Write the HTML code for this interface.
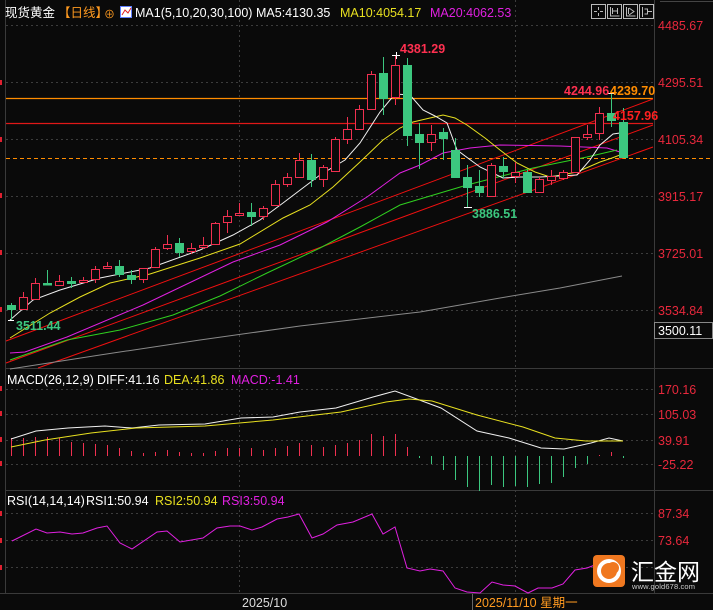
<!DOCTYPE html>
<html><head><meta charset="utf-8"><style>
html,body{margin:0;padding:0;background:#0a0a0a;width:713px;height:610px;overflow:hidden}
svg{display:block;font-family:"Liberation Sans","Noto Sans CJK SC",sans-serif}
</style></head><body>
<svg width="713" height="610" viewBox="0 0 713 610" xmlns="http://www.w3.org/2000/svg">
<rect width="713" height="610" fill="#0a0a0a"/>
<g stroke="#3a3a3a" stroke-width="1" fill="none">
<line x1="5.5" y1="0" x2="5.5" y2="593"/>
<line x1="654.5" y1="0" x2="654.5" y2="593"/>
<line x1="5" y1="368.5" x2="713" y2="368.5"/>
<line x1="5" y1="490.5" x2="713" y2="490.5"/>
<line x1="0" y1="593.5" x2="713" y2="593.5"/>
</g>
<g stroke="#3c3c3c" stroke-width="1" stroke-dasharray="2,3" fill="none">
<line x1="6" y1="25.5" x2="654" y2="25.5"/>
<line x1="6" y1="82.5" x2="654" y2="82.5"/>
<line x1="6" y1="139.5" x2="654" y2="139.5"/>
<line x1="6" y1="196.5" x2="654" y2="196.5"/>
<line x1="6" y1="253.5" x2="654" y2="253.5"/>
<line x1="6" y1="310.5" x2="654" y2="310.5"/>
<line x1="6" y1="389.5" x2="654" y2="389.5"/>
<line x1="6" y1="414.5" x2="654" y2="414.5"/>
<line x1="6" y1="440.5" x2="654" y2="440.5"/>
<line x1="6" y1="464.5" x2="654" y2="464.5"/>
<line x1="6" y1="513.5" x2="654" y2="513.5"/>
<line x1="6" y1="540.5" x2="654" y2="540.5"/>
<line x1="6" y1="567.5" x2="654" y2="567.5"/>
<line x1="239.5" y1="0" x2="239.5" y2="593"/>
<line x1="515.5" y1="0" x2="515.5" y2="593"/>
</g>
<g fill="#e02030"><rect x="0" y="80" width="2" height="5"/><rect x="0" y="137" width="2" height="5"/><rect x="0" y="193" width="2" height="5"/><rect x="0" y="250" width="2" height="5"/><rect x="0" y="307" width="2" height="5"/><rect x="0" y="386" width="2" height="5"/><rect x="0" y="411" width="2" height="5"/><rect x="0" y="437" width="2" height="5"/><rect x="0" y="461" width="2" height="5"/><rect x="0" y="511" width="2" height="5"/><rect x="0" y="538" width="2" height="5"/><rect x="0" y="565" width="2" height="5"/></g>

<line x1="6" y1="98.5" x2="653" y2="98.5" stroke="#ff8c00" stroke-width="1.2"/>
<line x1="6" y1="123.5" x2="653" y2="123.5" stroke="#e01818" stroke-width="1.2"/>
<line x1="6" y1="158.5" x2="713" y2="158.5" stroke="#ff8c00" stroke-width="1" stroke-dasharray="4,3"/>

<g stroke="#f01010" stroke-width="1" fill="none">
<line x1="6" y1="341" x2="653" y2="99"/>
<line x1="6" y1="363" x2="653" y2="125"/>
<line x1="38" y1="368" x2="653" y2="147"/>
</g>
<polyline fill="none" stroke="#8a8a8a" stroke-width="1" points="10,369 100,355 200,340 300,326 420,312 500,298 560,288 622,276"/>
<polyline fill="none" stroke="#e020e0" stroke-width="1" points="10,353 25,352 67,337 143,305 233,262 280,245 327,222 367,197 400,173 420,165 443,153 470,148 500,145 560,146 607,148 620,152"/>
<polyline fill="none" stroke="#30d020" stroke-width="1" points="10,360 67,340 120,330 173,315 220,296 267,273 320,248 360,227 400,205 420,199 467,185 533,168 587,157 617,150"/>
<polyline fill="none" stroke="#e8e020" stroke-width="1" points="10,338 50,313 80,297 110,283 150,274 200,258 240,244 283,218 310,205 333,187 360,162 383,140 400,128 413,122 430,118 443,115 455,118 467,125 485,138 500,150 517,163 535,172 550,177 577,172 600,162 612,158 620,155"/>
<polyline fill="none" stroke="#f0f0f0" stroke-width="1" points="10,320 33,300 60,290 100,278 150,268 200,250 233,235 260,220 283,203 320,175 345,160 360,143 380,112 395,94 410,95 423,110 435,116 447,123 457,150 480,167 503,178 520,177 540,177 577,175 590,160 600,145 613,134 620,133"/>

<g stroke-width="1">
<g stroke="#3cc77f" fill="#3cc77f"><line x1="11.5" y1="303" x2="11.5" y2="320"/><rect x="7.5" y="305.5" width="8" height="4"/></g>
<g stroke="#f03050" fill="#0a0a0a"><line x1="23.5" y1="292" x2="23.5" y2="297"/><rect x="19.5" y="297.5" width="8" height="12"/></g>
<g stroke="#f03050" fill="#0a0a0a"><line x1="35.5" y1="278" x2="35.5" y2="283"/><rect x="31.5" y="283.5" width="8" height="16"/></g>
<g stroke="#3cc77f" fill="#3cc77f"><line x1="47.5" y1="270" x2="47.5" y2="285"/><rect x="43.5" y="283.5" width="8" height="1.5"/></g>
<g stroke="#f03050" fill="#0a0a0a"><line x1="59.5" y1="275" x2="59.5" y2="281"/><rect x="55.5" y="281.5" width="8" height="4"/></g>
<g stroke="#3cc77f" fill="#3cc77f"><line x1="71.5" y1="277" x2="71.5" y2="288"/><rect x="67.5" y="281.5" width="8" height="2"/></g>
<g stroke="#f03050" fill="#0a0a0a"><line x1="83.5" y1="277" x2="83.5" y2="283"/><rect x="79.5" y="280.5" width="8" height="2"/></g>
<g stroke="#f03050" fill="#0a0a0a"><line x1="95.5" y1="266" x2="95.5" y2="283"/><rect x="91.5" y="269.5" width="8" height="10"/></g>
<g stroke="#f03050" fill="#0a0a0a"><line x1="107.5" y1="262" x2="107.5" y2="268"/><rect x="103.5" y="266.5" width="8" height="2"/></g>
<g stroke="#3cc77f" fill="#3cc77f"><line x1="119.5" y1="260" x2="119.5" y2="277"/><rect x="115.5" y="266.5" width="8" height="8"/></g>
<g stroke="#3cc77f" fill="#3cc77f"><line x1="131.5" y1="270" x2="131.5" y2="284"/><rect x="127.5" y="275.5" width="8" height="4"/></g>
<g stroke="#f03050" fill="#0a0a0a"><line x1="143.5" y1="279" x2="143.5" y2="283"/><rect x="139.5" y="268.5" width="8" height="11"/></g>
<g stroke="#f03050" fill="#0a0a0a"><line x1="155.5" y1="247" x2="155.5" y2="249"/><rect x="151.5" y="249.5" width="8" height="18"/></g>
<g stroke="#f03050" fill="#0a0a0a"><line x1="167.5" y1="235" x2="167.5" y2="250"/><rect x="163.5" y="244.5" width="8" height="4"/></g>
<g stroke="#3cc77f" fill="#3cc77f"><line x1="179.5" y1="238" x2="179.5" y2="257"/><rect x="175.5" y="243.5" width="8" height="9"/></g>
<g stroke="#f03050" fill="#0a0a0a"><line x1="191.5" y1="243" x2="191.5" y2="254"/><rect x="187.5" y="248.5" width="8" height="3"/></g>
<g stroke="#f03050" fill="#0a0a0a"><line x1="203.5" y1="237" x2="203.5" y2="249"/><rect x="199.5" y="245.5" width="8" height="2"/></g>
<g stroke="#f03050" fill="#0a0a0a"><line x1="215.5" y1="222" x2="215.5" y2="244"/><rect x="211.5" y="223.5" width="8" height="21"/></g>
<g stroke="#f03050" fill="#0a0a0a"><line x1="227.5" y1="210" x2="227.5" y2="233"/><rect x="223.5" y="216.5" width="8" height="6"/></g>
<g stroke="#f03050" fill="#0a0a0a"><line x1="239.5" y1="203" x2="239.5" y2="215"/><rect x="235.5" y="213.5" width="8" height="2"/></g>
<g stroke="#3cc77f" fill="#3cc77f"><line x1="251.5" y1="203" x2="251.5" y2="226"/><rect x="247.5" y="212.5" width="8" height="4"/></g>
<g stroke="#f03050" fill="#0a0a0a"><line x1="263.5" y1="206" x2="263.5" y2="220"/><rect x="259.5" y="208.5" width="8" height="8"/></g>
<g stroke="#f03050" fill="#0a0a0a"><line x1="275.5" y1="180" x2="275.5" y2="205"/><rect x="271.5" y="184.5" width="8" height="21"/></g>
<g stroke="#f03050" fill="#0a0a0a"><line x1="287.5" y1="173" x2="287.5" y2="187"/><rect x="283.5" y="177.5" width="8" height="7"/></g>
<g stroke="#f03050" fill="#0a0a0a"><line x1="299.5" y1="153" x2="299.5" y2="177"/><rect x="295.5" y="160.5" width="8" height="17"/></g>
<g stroke="#3cc77f" fill="#3cc77f"><line x1="311.5" y1="154" x2="311.5" y2="187"/><rect x="307.5" y="160.5" width="8" height="19"/></g>
<g stroke="#f03050" fill="#0a0a0a"><line x1="323.5" y1="165" x2="323.5" y2="187"/><rect x="319.5" y="167.5" width="8" height="12"/></g>
<g stroke="#f03050" fill="#0a0a0a"><line x1="335.5" y1="137" x2="335.5" y2="171"/><rect x="331.5" y="139.5" width="8" height="32"/></g>
<g stroke="#f03050" fill="#0a0a0a"><line x1="347.5" y1="117" x2="347.5" y2="144"/><rect x="343.5" y="129.5" width="8" height="10"/></g>
<g stroke="#f03050" fill="#0a0a0a"><line x1="359.5" y1="105" x2="359.5" y2="129"/><rect x="355.5" y="109.5" width="8" height="20"/></g>
<g stroke="#f03050" fill="#0a0a0a"><line x1="371.5" y1="71" x2="371.5" y2="109"/><rect x="367.5" y="74.5" width="8" height="35"/></g>
<g stroke="#3cc77f" fill="#3cc77f"><line x1="383.5" y1="57" x2="383.5" y2="115"/><rect x="379.5" y="73.5" width="8" height="25"/></g>
<g stroke="#f03050" fill="#0a0a0a"><line x1="395.5" y1="55" x2="395.5" y2="105"/><rect x="391.5" y="65.5" width="8" height="32"/></g>
<g stroke="#3cc77f" fill="#3cc77f"><line x1="407.5" y1="58" x2="407.5" y2="146"/><rect x="403.5" y="65.5" width="8" height="70"/></g>
<g stroke="#3cc77f" fill="#3cc77f"><line x1="419.5" y1="123" x2="419.5" y2="169"/><rect x="415.5" y="134.5" width="8" height="8"/></g>
<g stroke="#f03050" fill="#0a0a0a"><line x1="431.5" y1="125" x2="431.5" y2="151"/><rect x="427.5" y="134.5" width="8" height="8"/></g>
<g stroke="#3cc77f" fill="#3cc77f"><line x1="443.5" y1="128" x2="443.5" y2="160"/><rect x="439.5" y="132.5" width="8" height="6"/></g>
<g stroke="#3cc77f" fill="#3cc77f"><line x1="455.5" y1="138" x2="455.5" y2="177"/><rect x="451.5" y="150.5" width="8" height="27"/></g>
<g stroke="#3cc77f" fill="#3cc77f"><line x1="467.5" y1="165" x2="467.5" y2="207"/><rect x="463.5" y="177.5" width="8" height="10"/></g>
<g stroke="#3cc77f" fill="#3cc77f"><line x1="479.5" y1="170" x2="479.5" y2="197"/><rect x="475.5" y="186.5" width="8" height="6"/></g>
<g stroke="#f03050" fill="#0a0a0a"><line x1="491.5" y1="163" x2="491.5" y2="196"/><rect x="487.5" y="165.5" width="8" height="31"/></g>
<g stroke="#3cc77f" fill="#3cc77f"><line x1="503.5" y1="157" x2="503.5" y2="178"/><rect x="499.5" y="166.5" width="8" height="5"/></g>
<g stroke="#f03050" fill="#0a0a0a"><line x1="515.5" y1="162" x2="515.5" y2="183"/><rect x="511.5" y="172.5" width="8" height="4"/></g>
<g stroke="#3cc77f" fill="#3cc77f"><line x1="527.5" y1="170" x2="527.5" y2="192"/><rect x="523.5" y="172.5" width="8" height="20"/></g>
<g stroke="#f03050" fill="#0a0a0a"><line x1="539.5" y1="177" x2="539.5" y2="192"/><rect x="535.5" y="179.5" width="8" height="13"/></g>
<g stroke="#f03050" fill="#0a0a0a"><line x1="551.5" y1="170" x2="551.5" y2="185"/><rect x="547.5" y="176.5" width="8" height="4"/></g>
<g stroke="#f03050" fill="#0a0a0a"><line x1="563.5" y1="170" x2="563.5" y2="180"/><rect x="559.5" y="172.5" width="8" height="6"/></g>
<g stroke="#f03050" fill="#0a0a0a"><line x1="575.5" y1="137" x2="575.5" y2="172"/><rect x="571.5" y="137.5" width="8" height="35"/></g>
<g stroke="#f03050" fill="#0a0a0a"><line x1="587.5" y1="125" x2="587.5" y2="140"/><rect x="583.5" y="134.5" width="8" height="3"/></g>
<g stroke="#f03050" fill="#0a0a0a"><line x1="599.5" y1="107" x2="599.5" y2="140"/><rect x="595.5" y="113.5" width="8" height="20"/></g>
<g stroke="#3cc77f" fill="#3cc77f"><line x1="611.5" y1="93" x2="611.5" y2="127"/><rect x="607.5" y="113.5" width="8" height="7"/></g>
<g stroke="#3cc77f" fill="#3cc77f"><line x1="623.5" y1="108" x2="623.5" y2="157"/><rect x="619.5" y="122.5" width="8" height="35"/></g>
</g>
<g stroke="#ffffff" stroke-width="1"><line x1="392" y1="55.5" x2="400" y2="55.5"/><line x1="396.5" y1="52" x2="396.5" y2="59"/>
<line x1="464" y1="207.5" x2="472" y2="207.5"/><line x1="8" y1="320.5" x2="14" y2="320.5"/><line x1="608" y1="93.5" x2="615" y2="93.5"/></g>

<g font-size="12.5">
<text x="400" y="53" fill="#ff3050" font-weight="bold">4381.29</text>
<text x="472" y="218" fill="#3cc77f" font-weight="bold">3886.51</text>
<text x="16" y="330" fill="#3cc77f" font-weight="bold">3511.44</text>
<text x="564" y="95" fill="#ff3050" font-weight="bold">4244.96</text>
<text x="610" y="95" fill="#ff8c00" font-weight="bold">4239.70</text>
<text x="613" y="120" fill="#ff2020" font-weight="bold">4157.96</text>
</g>
<g font-size="12.5" fill="#e8283c">
<text x="658" y="30">4485.67</text>
<text x="658" y="87">4295.51</text>
<text x="658" y="144">4105.34</text>
<text x="658" y="201">3915.17</text>
<text x="658" y="258">3725.01</text>
<text x="658" y="315">3534.84</text>
<text x="658" y="394">170.16</text>
<text x="658" y="419">105.03</text>
<text x="658" y="445">39.91</text>
<text x="658" y="469">-25.22</text>
<text x="658" y="518">87.34</text>
<text x="658" y="545">73.64</text>
</g>
<rect x="654.5" y="322.5" width="58" height="16" fill="#0a0a0a" stroke="#888"/>
<text x="658" y="335" font-size="12.5" fill="#ffffff">3500.11</text>

<g font-size="12.5">
<text x="5" y="17" fill="#ffffff">现货黄金</text>
<text x="58" y="17" fill="#ff9a20">【日线】</text>
<text x="104" y="18" fill="#ff9a20" font-size="11">⊕</text>
<rect x="120.5" y="6.5" width="11" height="11" fill="#ffffff" stroke="#6080ff"/>
<polyline points="122,15 125,10 128,13 131,8" fill="none" stroke="#e02020"/>
<text x="135" y="17" fill="#ffffff">MA1(5,10,20,30,100)</text>
<text x="256" y="17" fill="#ffffff">MA5:4130.35</text>
<text x="340" y="17" fill="#e8e020">MA10:4054.17</text>
<text x="430" y="17" fill="#e020e0">MA20:4062.53</text>
</g>
<g stroke="#bbbbbb" fill="none" stroke-width="1">
<rect x="591.5" y="4.5" width="14" height="14"/><rect x="607.5" y="4.5" width="14" height="14"/><rect x="623.5" y="4.5" width="14" height="14"/><rect x="639.5" y="4.5" width="14" height="14"/>
<path d="M598.5 7v3M598.5 13v3M594 11.5h3M600 11.5h3"/>
<path d="M610.5 7v9h9M612.5 8v6M617.5 8v6M613 11h4"/>
<path d="M626.5 7v9h9M628.5 8v6M629 8l5 3.5-5 3.5"/>
<path d="M642.5 7v10M644.5 9h3v5h-3M647 11.5h5"/>
</g>
<line x1="660" y1="1.5" x2="713" y2="1.5" stroke="#444"/>

<g font-size="12.5">
<text x="7" y="384" fill="#ffffff">MACD(26,12,9)</text>
<text x="97" y="384" fill="#ffffff">DIFF:41.16</text>
<text x="164" y="384" fill="#e8e020">DEA:41.86</text>
<text x="231" y="384" fill="#e020e0">MACD:-1.41</text>
</g>
<g stroke="#f03050" stroke-width="1">
<line x1="11.5" y1="456" x2="11.5" y2="438"/><line x1="23.5" y1="456" x2="23.5" y2="438"/><line x1="35.5" y1="456" x2="35.5" y2="437"/><line x1="47.5" y1="456" x2="47.5" y2="437"/><line x1="59.5" y1="456" x2="59.5" y2="438"/><line x1="71.5" y1="456" x2="71.5" y2="442"/><line x1="83.5" y1="456" x2="83.5" y2="443"/><line x1="95.5" y1="456" x2="95.5" y2="444"/><line x1="107.5" y1="456" x2="107.5" y2="445"/><line x1="119.5" y1="456" x2="119.5" y2="448"/><line x1="131.5" y1="456" x2="131.5" y2="451"/><line x1="143.5" y1="456" x2="143.5" y2="453"/><line x1="155.5" y1="456" x2="155.5" y2="452"/><line x1="167.5" y1="456" x2="167.5" y2="450"/><line x1="179.5" y1="456" x2="179.5" y2="452"/><line x1="191.5" y1="456" x2="191.5" y2="453"/><line x1="203.5" y1="456" x2="203.5" y2="453"/><line x1="215.5" y1="456" x2="215.5" y2="451"/><line x1="227.5" y1="456" x2="227.5" y2="448"/><line x1="239.5" y1="456" x2="239.5" y2="448"/><line x1="251.5" y1="456" x2="251.5" y2="448"/><line x1="263.5" y1="456" x2="263.5" y2="450"/><line x1="275.5" y1="456" x2="275.5" y2="448"/><line x1="287.5" y1="456" x2="287.5" y2="446"/><line x1="299.5" y1="456" x2="299.5" y2="443"/><line x1="311.5" y1="456" x2="311.5" y2="445"/><line x1="323.5" y1="456" x2="323.5" y2="447"/><line x1="335.5" y1="456" x2="335.5" y2="445"/><line x1="347.5" y1="456" x2="347.5" y2="443"/><line x1="359.5" y1="456" x2="359.5" y2="440"/><line x1="371.5" y1="456" x2="371.5" y2="434"/><line x1="383.5" y1="456" x2="383.5" y2="436"/><line x1="395.5" y1="456" x2="395.5" y2="434"/><line x1="407.5" y1="456" x2="407.5" y2="447"/>
<line x1="599.5" y1="456" x2="599.5" y2="455"/><line x1="611.5" y1="456" x2="611.5" y2="452"/>
</g>
<g stroke="#3cc77f" stroke-width="1">
<line x1="419.5" y1="456" x2="419.5" y2="458"/><line x1="431.5" y1="456" x2="431.5" y2="464"/><line x1="443.5" y1="456" x2="443.5" y2="470"/><line x1="455.5" y1="456" x2="455.5" y2="480"/><line x1="467.5" y1="456" x2="467.5" y2="487"/><line x1="479.5" y1="456" x2="479.5" y2="491"/><line x1="491.5" y1="456" x2="491.5" y2="485"/><line x1="503.5" y1="456" x2="503.5" y2="487"/><line x1="515.5" y1="456" x2="515.5" y2="486"/><line x1="527.5" y1="456" x2="527.5" y2="487"/><line x1="539.5" y1="456" x2="539.5" y2="484"/><line x1="551.5" y1="456" x2="551.5" y2="483"/><line x1="563.5" y1="456" x2="563.5" y2="477"/><line x1="575.5" y1="456" x2="575.5" y2="468"/><line x1="587.5" y1="456" x2="587.5" y2="464"/><line x1="623.5" y1="456" x2="623.5" y2="458"/>
</g>
<polyline fill="none" stroke="#f0f0f0" stroke-width="1" points="11,439 36,431 68,428 105,426 132,428 159,425 205,424 241,418 273,417 300,412 336,408 373,397 395,391 414,398 441,408 477,431 509,438 541,448 564,449 591,443 609,438 623,441"/>
<polyline fill="none" stroke="#e8e020" stroke-width="1" points="11,447 45,440 91,433 136,428 205,426 273,420 341,412 386,402 409,399 432,401 477,415 523,427 555,438 586,441 623,441"/>

<g font-size="12.5">
<text x="7" y="505" fill="#ffffff">RSI(14,14,14)</text>
<text x="86" y="505" fill="#ffffff">RSI1:50.94</text>
<text x="155" y="505" fill="#e8e020">RSI2:50.94</text>
<text x="222" y="505" fill="#e020e0">RSI3:50.94</text>
</g>
<polyline fill="none" stroke="#e020e0" stroke-width="1" points="12,541 36,529 47,533 60,532 72,534 83,533 97,528 107,526 120,543 132,549 157,532 167,531 180,542 203,538 217,528 230,526 240,526 252,530 262,527 277,519 288,517 299,514 312,538 323,534 337,525 353,522 372,514 383,534 395,527 407,568 420,571 430,569 443,571 455,588 467,592 480,593 492,582 503,585 515,586 528,593 538,588 552,588 563,584 575,570 587,568 600,563"/>

<g font-size="12.5">
<text x="242" y="607" fill="#dddddd">2025/10</text>
<line x1="472.5" y1="594" x2="472.5" y2="610" stroke="#666"/>
<text x="475" y="607" fill="#ff9a20">2025/11/10 星期一</text>
</g>

<rect x="593" y="555" width="32" height="32" rx="4" fill="#f07820"/>
<circle cx="609" cy="571" r="10" fill="none" stroke="#ffffff" stroke-width="4"/>
<circle cx="613" cy="568" r="6" fill="#f07820"/>
<text x="631" y="580" font-size="23" fill="#ffffff" font-family="'Noto Sans CJK SC',sans-serif">汇金网</text>
<text x="632" y="589" font-size="7.5" fill="#cccccc" textLength="63">www.gold678.com</text>
</svg>
</body></html>
